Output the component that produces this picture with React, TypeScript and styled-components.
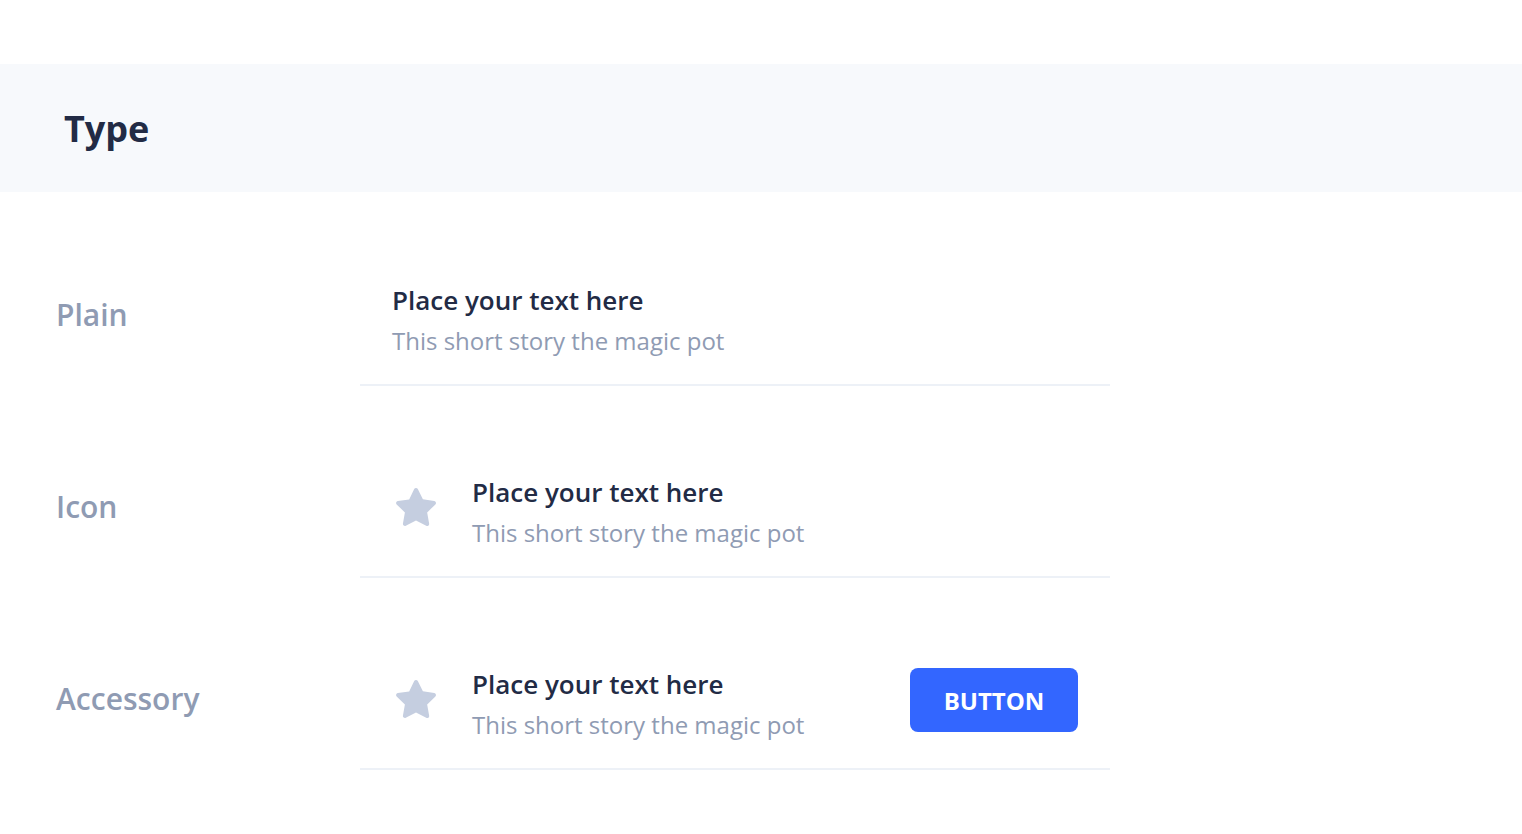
import React from "react";
import styled, { createGlobalStyle } from "styled-components";

const GlobalStyle = createGlobalStyle`
  body {
    margin: 0;
    background: #ffffff;
    font-family: "Open Sans", sans-serif;
    color: #222b45;
  }
`;

const Page = styled.main`
  padding: 64px 0;
`;

const SectionHeader = styled.header`
  padding: 40px 64px 38px;
  background: #f7f9fc;
`;

const SectionTitle = styled.h1`
  margin: 0;
  font-size: 36px;
  line-height: 50px;
  font-weight: 700;
`;

const Examples = styled.div`
  display: grid;
  gap: 54px;
  padding: 56px 56px 0;
`;

const Example = styled.section`
  display: grid;
  grid-template-columns: 304px minmax(0, 750px);
  align-items: center;
`;

const ExampleName = styled.h2`
  margin: 0;
  padding-bottom: 4px;
  font-size: 30px;
  line-height: 40px;
  font-weight: 600;
  color: #8f9bb3;
`;

const ListItem = styled.div`
  display: flex;
  align-items: center;
  box-sizing: border-box;
  min-height: 138px;
  padding: 0 32px;
  border-bottom: 2px solid #edf1f7;
`;

const StarIcon = styled.svg`
  flex: none;
  width: 48px;
  height: 48px;
  margin-right: 32px;
  fill: #c5cee0;
`;

const ItemText = styled.div`
  flex: 1;
`;

const ItemTitle = styled.h3`
  margin: 0;
  font-size: 26px;
  line-height: 50px;
  font-weight: 600;
`;

const ItemDescription = styled.p`
  margin: 0;
  font-size: 24px;
  line-height: 32px;
  color: #8f9bb3;
`;

const ActionButton = styled.button`
  min-width: 168px;
  height: 64px;
  padding: 2px 32px 0;
  border: 0;
  border-radius: 8px;
  background: #3366ff;
  color: #ffffff;
  font: 700 24px/32px "Open Sans", sans-serif;
`;

type Row = { name: string; icon?: boolean; action?: string };

const rows: Row[] = [
  { name: "Plain" },
  { name: "Icon", icon: true },
  { name: "Accessory", icon: true, action: "BUTTON" },
];

function Star() {
  return (
    <StarIcon viewBox="0 0 24 24" aria-hidden="true">
      <path d="M17.56 21a1 1 0 0 1-.46-.11L12 18.22l-5.1 2.67a1 1 0 0 1-1.45-1.06l1-5.63-4.12-4a1 1 0 0 1-.25-1 1 1 0 0 1 .81-.68l5.7-.83 2.51-5.13a1 1 0 0 1 1.8 0l2.54 5.12 5.7.83a1 1 0 0 1 .81.68 1 1 0 0 1-.25 1l-4.12 4 1 5.63a1 1 0 0 1-.4 1 1 1 0 0 1-.62.18z" />
    </StarIcon>
  );
}

export default function App() {
  return (
    <>
      <GlobalStyle />
      <Page>
        <SectionHeader>
          <SectionTitle>Type</SectionTitle>
        </SectionHeader>
        <Examples>
          {rows.map((row) => (
            <Example key={row.name}>
              <ExampleName>{row.name}</ExampleName>
              <ListItem>
                {row.icon && <Star />}
                <ItemText>
                  <ItemTitle>Place your text here</ItemTitle>
                  <ItemDescription>This short story the magic pot</ItemDescription>
                </ItemText>
                {row.action && <ActionButton type="button">{row.action}</ActionButton>}
              </ListItem>
            </Example>
          ))}
        </Examples>
      </Page>
    </>
  );
}
